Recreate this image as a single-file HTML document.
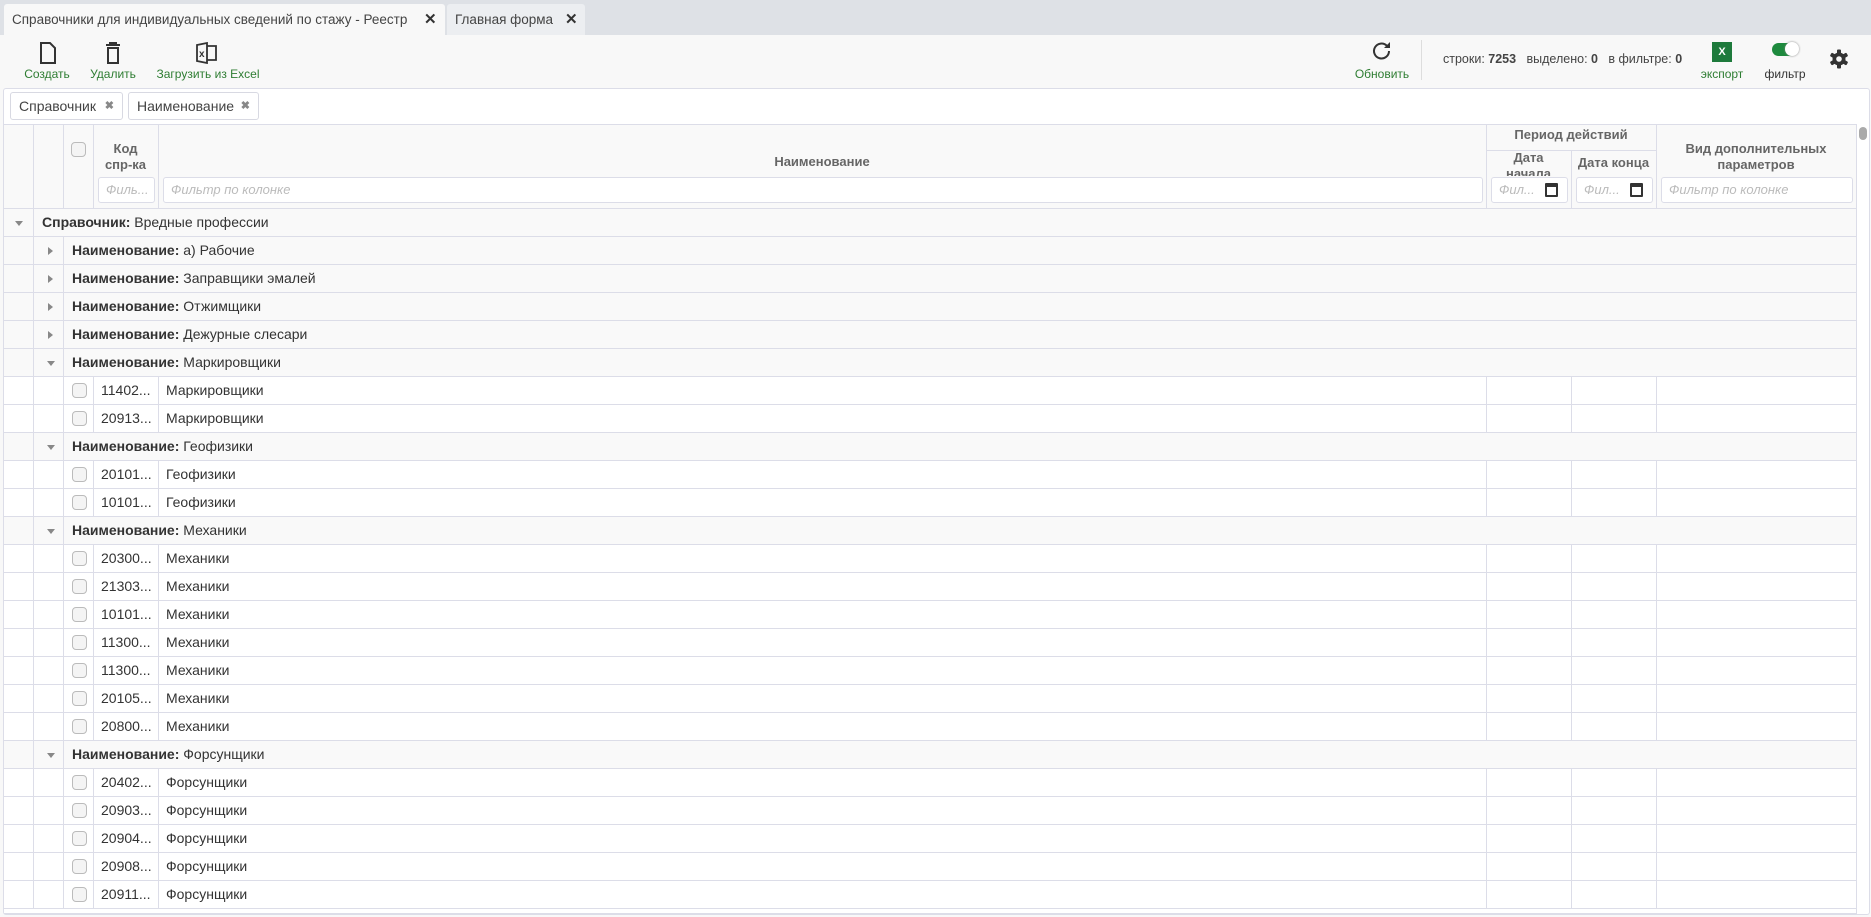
<!DOCTYPE html>
<html><head><meta charset="utf-8">
<style>
*{box-sizing:border-box;margin:0;padding:0}
body{width:1871px;height:917px;overflow:hidden;background:#f8f8f8;font-family:"Liberation Sans","Noto Sans CJK SC",sans-serif;font-size:14px;color:#333;position:relative}
.abs{position:absolute}
.tabbar{left:0;top:0;width:1871px;height:35px;background:#dee1e6}
.tab{top:4px;height:31px;line-height:31px;font-size:13.5px;color:#444;padding-left:8px;white-space:nowrap}
.tb{color:#2e7d32;font-size:12px;text-align:center}
.panel{left:3px;top:88px;width:1867px;height:827px;background:#fff;border:1px solid #dcdde8;border-radius:3px}
.chip{top:92px;height:28px;line-height:26px;border:1px solid #d8d9e2;border-radius:3px;background:#fff;padding-left:8px;font-size:14px;color:#444}
.chip b{position:absolute;right:8px;top:0;color:#888;font-size:11px}
.vl{position:absolute;width:1px;background:#dcdde8}
.hl{position:absolute;height:1px;background:#dcdde8}
.hd{position:absolute;color:#666;font-weight:bold;font-size:13px;text-align:center;line-height:16px}
.inp{position:absolute;top:177px;height:26px;border:1px solid #dcdde8;border-radius:3px;background:#fff;color:#bbb;font-style:italic;font-size:13px;line-height:24px;padding-left:7px;overflow:hidden;white-space:nowrap}
.cb{position:absolute;width:15px;height:15px;border:1px solid #bbb;border-radius:4px;background:#f4f4f4}
.row{position:absolute;left:4px;width:1852px;height:28px;border-bottom:1px solid #dcdde8}
.g{background:#f9f9f9}
.row span{position:absolute;top:0;line-height:27px;white-space:nowrap}
.row i{position:absolute;top:0;width:1px;height:28px;background:#dcdde8}
.ar{width:0;height:0;position:absolute}
.dn{border-left:4px solid transparent;border-right:4px solid transparent;border-top:5px solid #888;top:12px}
.rt{border-top:4px solid transparent;border-bottom:4px solid transparent;border-left:5px solid #888;top:10px}
.cal{position:absolute;top:183px;width:13px;height:14px;border:2px solid #333;border-top-width:4px;border-radius:1px}
</style></head><body>
<div class="abs tabbar"></div>
<div class="abs tab" style="left:4px;width:441px;background:#f8f8f8;border-radius:3px 3px 0 0">Справочники для индивидуальных сведений по стажу - Реестр<span style="position:absolute;left:420px;font-weight:bold;font-size:15px;color:#333">✕</span></div>
<div class="abs tab" style="left:447px;width:138px;background:#eceef1;border-radius:3px 3px 0 0">Главная форма<span style="position:absolute;left:118px;font-weight:bold;font-size:15px;color:#333">✕</span></div>

<svg class="abs" style="left:39px;top:42px" width="18" height="22" viewBox="0 0 18 22"><path d="M2 1h9l5 5v15H2z" fill="none" stroke="#333" stroke-width="2"/></svg>
<svg class="abs" style="left:105px;top:42px" width="16" height="22" viewBox="0 0 16 22"><path d="M1 3h14M5 3V1h6v2M3 6h10v15H3z" fill="none" stroke="#333" stroke-width="2"/></svg>
<svg class="abs" style="left:196px;top:42px" width="22" height="22" viewBox="0 0 22 22"><path d="M1 3l10-2v20L1 19zM11 4h9v14h-9" fill="none" stroke="#333" stroke-width="1.8"/><text x="3" y="15" font-size="10" font-weight="bold" font-family="Liberation Sans" fill="#333">x</text></svg>
<div class="abs tb" style="left:20px;top:67px;width:54px">Создать</div>
<div class="abs tb" style="left:86px;top:67px;width:54px">Удалить</div>
<div class="abs tb" style="left:152px;top:67px;width:112px">Загрузить из Excel</div>

<svg class="abs" style="left:1371px;top:40px" width="22" height="22" viewBox="0 0 22 22"><path d="M18 11a7.5 7.5 0 1 1-2.2-5.3" fill="none" stroke="#333" stroke-width="2"/><path d="M19 2v6h-6z" fill="#333"/></svg>
<div class="abs tb" style="left:1350px;top:67px;width:64px">Обновить</div>
<div class="abs" style="left:1421px;top:40px;width:1px;height:40px;background:#ddd"></div>
<div class="abs" style="left:1443px;top:52px;font-size:12.5px;color:#444;white-space:nowrap">строки: <b>7253</b>&nbsp;&nbsp; выделено: <b>0</b>&nbsp;&nbsp; в фильтре: <b>0</b></div>
<div class="abs" style="left:1712px;top:42px;width:20px;height:20px;background:#1e7a3c;color:#fff;font-size:11px;font-weight:bold;text-align:center;line-height:20px">X</div>
<div class="abs tb" style="left:1695px;top:67px;width:54px">экспорт</div>
<div class="abs" style="left:1772px;top:43px;width:25px;height:13px;background:#1e8a3e;border-radius:7px"></div>
<div class="abs" style="left:1785px;top:42px;width:14px;height:14px;background:#fff;border-radius:7px;box-shadow:0 0 2px #888"></div>
<div class="abs tb" style="left:1757px;top:67px;width:56px;color:#333">фильтр</div>
<svg class="abs" style="left:1829px;top:49px" width="20" height="20" viewBox="0 0 20 20"><g fill="#333"><circle cx="10" cy="10" r="6.5"/><rect x="8" y="0.5" width="4" height="19" rx="1"/><rect x="8" y="0.5" width="4" height="19" rx="1" transform="rotate(60 10 10)"/><rect x="8" y="0.5" width="4" height="19" rx="1" transform="rotate(120 10 10)"/></g><circle cx="10" cy="10" r="2.8" fill="#f8f8f8"/></svg>

<div class="abs panel"></div>
<div class="abs chip" style="left:10px;width:113px">Справочник<b>✖</b></div>
<div class="abs chip" style="left:128px;width:131px">Наименование<b>✖</b></div>

<!-- header -->
<div class="abs" style="left:4px;top:124px;width:1852px;height:85px;background:#f9f9f9;border-top:1px solid #dcdde8;border-bottom:1px solid #dcdde8"></div>
<div class="vl" style="left:33px;top:124px;height:790px"></div>
<div class="vl" style="left:63px;top:124px;height:85px"></div>
<div class="vl" style="left:93px;top:124px;height:85px"></div>
<div class="vl" style="left:158px;top:124px;height:85px"></div>
<div class="vl" style="left:1486px;top:124px;height:85px"></div>
<div class="vl" style="left:1571px;top:150px;height:59px"></div>
<div class="vl" style="left:1656px;top:124px;height:85px"></div>
<div class="vl" style="left:1856px;top:124px;height:790px"></div>
<div class="hl" style="left:1486px;top:150px;width:170px"></div>
<div class="cb" style="left:71px;top:142px"></div>
<div class="hd" style="left:93px;top:141px;width:65px">Код<br>спр-ка</div>
<div class="hd" style="left:158px;top:154px;width:1328px">Наименование</div>
<div class="hd" style="left:1486px;top:127px;width:170px">Период действий</div>
<div class="hd" style="left:1486px;top:150px;width:85px;height:26px;overflow:hidden">Дата<br>начала</div>
<div class="hd" style="left:1571px;top:155px;width:85px">Дата конца</div>
<div class="hd" style="left:1656px;top:141px;width:200px">Вид дополнительных<br>параметров</div>
<div class="inp" style="left:98px;width:57px">Филь...</div>
<div class="inp" style="left:163px;width:1320px">Фильтр по колонке</div>
<div class="inp" style="left:1491px;width:77px">Фил...</div><div class="cal" style="left:1545px"></div>
<div class="inp" style="left:1576px;width:77px">Фил...</div><div class="cal" style="left:1630px"></div>
<div class="inp" style="left:1661px;width:192px">Фильтр по колонке</div>
<div class="abs" style="left:1859px;top:127px;width:8px;height:13px;background:#aaa;border-radius:4px"></div>

<!-- rows -->
<div class="row g" style="top:209px"><div class="ar dn" style="left:11px"></div><i style="left:29px"></i><span style="left:38px"><b>Справочник:</b> Вредные профессии</span></div>

<div class="row g" style="top:237px"><i style="left:29px"></i><div class="ar rt" style="left:44px"></div><i style="left:59px"></i><span style="left:68px"><b>Наименование:</b> а) Рабочие</span></div>
<div class="row g" style="top:265px"><i style="left:29px"></i><div class="ar rt" style="left:44px"></div><i style="left:59px"></i><span style="left:68px"><b>Наименование:</b> Заправщики эмалей</span></div>
<div class="row g" style="top:293px"><i style="left:29px"></i><div class="ar rt" style="left:44px"></div><i style="left:59px"></i><span style="left:68px"><b>Наименование:</b> Отжимщики</span></div>
<div class="row g" style="top:321px"><i style="left:29px"></i><div class="ar rt" style="left:44px"></div><i style="left:59px"></i><span style="left:68px"><b>Наименование:</b> Дежурные слесари</span></div>

<div class="row g" style="top:349px"><i style="left:29px"></i><div class="ar dn" style="left:43px"></div><i style="left:59px"></i><span style="left:68px"><b>Наименование:</b> Маркировщики</span></div>
<div class="row" style="top:377px;background:#fff"><i style="left:29px"></i><i style="left:59px"></i><div class="cb" style="left:68px;top:6px"></div><i style="left:89px"></i><span style="left:97px">11402...</span><i style="left:154px"></i><span style="left:162px">Маркировщики</span><i style="left:1482px"></i><i style="left:1567px"></i><i style="left:1652px"></i></div>
<div class="row" style="top:405px;background:#fff"><i style="left:29px"></i><i style="left:59px"></i><div class="cb" style="left:68px;top:6px"></div><i style="left:89px"></i><span style="left:97px">20913...</span><i style="left:154px"></i><span style="left:162px">Маркировщики</span><i style="left:1482px"></i><i style="left:1567px"></i><i style="left:1652px"></i></div>

<div class="row g" style="top:433px"><i style="left:29px"></i><div class="ar dn" style="left:43px"></div><i style="left:59px"></i><span style="left:68px"><b>Наименование:</b> Геофизики</span></div>
<div class="row" style="top:461px;background:#fff"><i style="left:29px"></i><i style="left:59px"></i><div class="cb" style="left:68px;top:6px"></div><i style="left:89px"></i><span style="left:97px">20101...</span><i style="left:154px"></i><span style="left:162px">Геофизики</span><i style="left:1482px"></i><i style="left:1567px"></i><i style="left:1652px"></i></div>
<div class="row" style="top:489px;background:#fff"><i style="left:29px"></i><i style="left:59px"></i><div class="cb" style="left:68px;top:6px"></div><i style="left:89px"></i><span style="left:97px">10101...</span><i style="left:154px"></i><span style="left:162px">Геофизики</span><i style="left:1482px"></i><i style="left:1567px"></i><i style="left:1652px"></i></div>

<div class="row g" style="top:517px"><i style="left:29px"></i><div class="ar dn" style="left:43px"></div><i style="left:59px"></i><span style="left:68px"><b>Наименование:</b> Механики</span></div>
<div class="row" style="top:545px;background:#fff"><i style="left:29px"></i><i style="left:59px"></i><div class="cb" style="left:68px;top:6px"></div><i style="left:89px"></i><span style="left:97px">20300...</span><i style="left:154px"></i><span style="left:162px">Механики</span><i style="left:1482px"></i><i style="left:1567px"></i><i style="left:1652px"></i></div>
<div class="row" style="top:573px;background:#fff"><i style="left:29px"></i><i style="left:59px"></i><div class="cb" style="left:68px;top:6px"></div><i style="left:89px"></i><span style="left:97px">21303...</span><i style="left:154px"></i><span style="left:162px">Механики</span><i style="left:1482px"></i><i style="left:1567px"></i><i style="left:1652px"></i></div>
<div class="row" style="top:601px;background:#fff"><i style="left:29px"></i><i style="left:59px"></i><div class="cb" style="left:68px;top:6px"></div><i style="left:89px"></i><span style="left:97px">10101...</span><i style="left:154px"></i><span style="left:162px">Механики</span><i style="left:1482px"></i><i style="left:1567px"></i><i style="left:1652px"></i></div>
<div class="row" style="top:629px;background:#fff"><i style="left:29px"></i><i style="left:59px"></i><div class="cb" style="left:68px;top:6px"></div><i style="left:89px"></i><span style="left:97px">11300...</span><i style="left:154px"></i><span style="left:162px">Механики</span><i style="left:1482px"></i><i style="left:1567px"></i><i style="left:1652px"></i></div>
<div class="row" style="top:657px;background:#fff"><i style="left:29px"></i><i style="left:59px"></i><div class="cb" style="left:68px;top:6px"></div><i style="left:89px"></i><span style="left:97px">11300...</span><i style="left:154px"></i><span style="left:162px">Механики</span><i style="left:1482px"></i><i style="left:1567px"></i><i style="left:1652px"></i></div>
<div class="row" style="top:685px;background:#fff"><i style="left:29px"></i><i style="left:59px"></i><div class="cb" style="left:68px;top:6px"></div><i style="left:89px"></i><span style="left:97px">20105...</span><i style="left:154px"></i><span style="left:162px">Механики</span><i style="left:1482px"></i><i style="left:1567px"></i><i style="left:1652px"></i></div>
<div class="row" style="top:713px;background:#fff"><i style="left:29px"></i><i style="left:59px"></i><div class="cb" style="left:68px;top:6px"></div><i style="left:89px"></i><span style="left:97px">20800...</span><i style="left:154px"></i><span style="left:162px">Механики</span><i style="left:1482px"></i><i style="left:1567px"></i><i style="left:1652px"></i></div>

<div class="row g" style="top:741px"><i style="left:29px"></i><div class="ar dn" style="left:43px"></div><i style="left:59px"></i><span style="left:68px"><b>Наименование:</b> Форсунщики</span></div>
<div class="row" style="top:769px;background:#fff"><i style="left:29px"></i><i style="left:59px"></i><div class="cb" style="left:68px;top:6px"></div><i style="left:89px"></i><span style="left:97px">20402...</span><i style="left:154px"></i><span style="left:162px">Форсунщики</span><i style="left:1482px"></i><i style="left:1567px"></i><i style="left:1652px"></i></div>
<div class="row" style="top:797px;background:#fff"><i style="left:29px"></i><i style="left:59px"></i><div class="cb" style="left:68px;top:6px"></div><i style="left:89px"></i><span style="left:97px">20903...</span><i style="left:154px"></i><span style="left:162px">Форсунщики</span><i style="left:1482px"></i><i style="left:1567px"></i><i style="left:1652px"></i></div>
<div class="row" style="top:825px;background:#fff"><i style="left:29px"></i><i style="left:59px"></i><div class="cb" style="left:68px;top:6px"></div><i style="left:89px"></i><span style="left:97px">20904...</span><i style="left:154px"></i><span style="left:162px">Форсунщики</span><i style="left:1482px"></i><i style="left:1567px"></i><i style="left:1652px"></i></div>
<div class="row" style="top:853px;background:#fff"><i style="left:29px"></i><i style="left:59px"></i><div class="cb" style="left:68px;top:6px"></div><i style="left:89px"></i><span style="left:97px">20908...</span><i style="left:154px"></i><span style="left:162px">Форсунщики</span><i style="left:1482px"></i><i style="left:1567px"></i><i style="left:1652px"></i></div>
<div class="row" style="top:881px;background:#fff"><i style="left:29px"></i><i style="left:59px"></i><div class="cb" style="left:68px;top:6px"></div><i style="left:89px"></i><span style="left:97px">20911...</span><i style="left:154px"></i><span style="left:162px">Форсунщики</span><i style="left:1482px"></i><i style="left:1567px"></i><i style="left:1652px"></i></div>
<div class="abs" style="left:4px;top:909px;width:1852px;height:5px;background:#fff;border-bottom:1px solid #dcdde8"></div>
</body></html>
